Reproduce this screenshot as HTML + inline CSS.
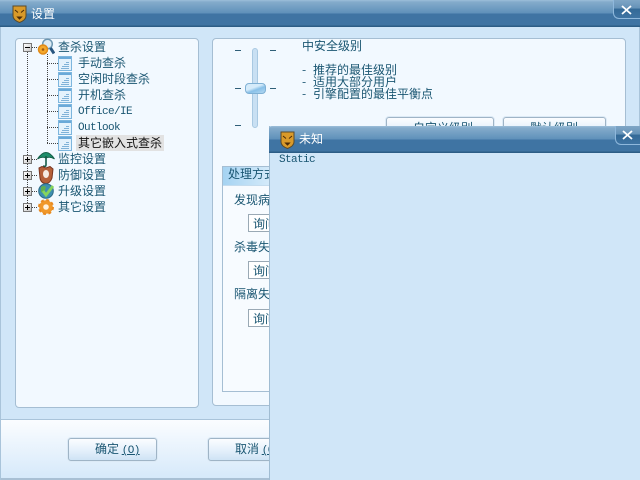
<!DOCTYPE html>
<html><head><meta charset="utf-8">
<style>
html,body{margin:0;padding:0;width:640px;height:480px;overflow:hidden;background:#d0e6f8}
*{box-sizing:border-box}
body{font:12px/14px "WenQuanYi Zen Hei","Noto Sans CJK SC",sans-serif;color:#1a5672}
.a{position:absolute}
.t{position:absolute;white-space:nowrap;line-height:14px;height:14px}
.m{font-family:"Liberation Mono",monospace;font-size:11px;letter-spacing:-.6px}
.bar{position:absolute;height:27px;background:linear-gradient(#9dbfd9 0,#84abcb 2px,#5f91ba 13px,#3f74a3 14px,#3f74a3 25px,#2c5d86 26px)}
.x{position:absolute;width:27px;height:19px;border:1px solid #8fb8dc;border-top:0;border-right:0;border-radius:0 0 0 6px;background:linear-gradient(#7fa6c6 0,#6592b8 45%,#336997 50%,#3f74a3 100%)}
.panel{position:absolute;background:#f2f9ff;border:1px solid #a5bed3;border-radius:4px}
.btn{position:absolute;border:1px solid #9fb4c6;border-radius:3px;background:linear-gradient(#fbfdff,#e4f0fb 55%,#cfe3f5);box-shadow:0 0 0 1px #dceaf6;color:#1a5672}
.combo{position:absolute;left:248px;width:40px;height:18px;background:#fff;border:1px solid #9aa9b5;border-right:0;padding:2px 0 0 4px}
.pm{position:absolute;left:23px;width:9px;height:9px;background:linear-gradient(135deg,#fff,#c8c8c8);border:1px solid #777}
.pm:before{content:"";position:absolute;left:1px;top:3px;width:5px;height:1px;background:#000}
.pm.p:after{content:"";position:absolute;left:3px;top:1px;width:1px;height:5px;background:#000}
.dv{position:absolute;width:1px;background:repeating-linear-gradient(#444 0 1px,transparent 1px 2px)}
.dh{position:absolute;height:1px;background:repeating-linear-gradient(90deg,#444 0 1px,transparent 1px 2px)}
.tk{position:absolute;width:6px;height:1px;background:#2f5f78}
</style></head><body>

<!-- main window -->
<div class="bar" style="left:0;top:0;width:640px"></div>
<svg class="a" style="left:12px;top:5px" width="15" height="18" viewBox="0 0 15 18"><path d="M1 1H14V11Q14 15 7.500 17.500Q1 15 1 11Z" fill="#d99a2a" stroke="#5a4a2a"/><path d="M3 5L6 7.500M12 5L9 7.500M5.500 12H9.500L7.500 14Z" stroke="#4a2a08" fill="#4a2a08"/></svg>
<div class="t" style="left:31px;top:7px;color:#fff">设置</div>
<div class="x" style="left:613px;top:0"></div>
<svg class="a" style="left:620px;top:5px" width="13" height="10" viewBox="0 0 13 10"><path d="M2 1L11 9M11 1L2 9" stroke="#fff" stroke-width="1.800"/></svg>

<!-- tree panel -->
<div class="panel" style="left:15px;top:38px;width:184px;height:370px"></div>
<div class="dv" style="left:27px;top:52px;height:156px"></div>
<div class="dv" style="left:47px;top:54px;height:90px"></div>
<div class="dh" style="left:47px;top:63px;width:11px"></div>
<div class="dh" style="left:47px;top:79px;width:11px"></div>
<div class="dh" style="left:47px;top:95px;width:11px"></div>
<div class="dh" style="left:47px;top:111px;width:11px"></div>
<div class="dh" style="left:47px;top:127px;width:11px"></div>
<div class="dh" style="left:47px;top:143px;width:11px"></div>
<div class="dh" style="left:32px;top:47px;width:6px"></div>
<div class="dh" style="left:32px;top:159px;width:6px"></div>
<div class="dh" style="left:32px;top:175px;width:6px"></div>
<div class="dh" style="left:32px;top:191px;width:6px"></div>
<div class="dh" style="left:32px;top:207px;width:6px"></div>
<div class="pm" style="top:43px"></div>
<div class="pm p" style="top:155px"></div>
<div class="pm p" style="top:171px"></div>
<div class="pm p" style="top:187px"></div>
<div class="pm p" style="top:203px"></div>

<svg class="a" style="left:37px;top:38px" width="18" height="18" viewBox="0 0 18 18"><circle cx="10.500" cy="6" r="4.800" fill="#dcebf5" stroke="#6d97b2" stroke-width="1.500"/><path d="M13.500 10L17 15.500" stroke="#27557f" stroke-width="3"/><circle cx="6" cy="11.500" r="4.500" fill="#f4a82a" stroke="#e08a18" stroke-width="1.500"/><circle cx="6" cy="11.500" r="1.300" fill="#a05a10"/></svg>
<svg class="a" style="left:37px;top:149px" width="18" height="19" viewBox="0 0 18 19"><path d="M0.500 10Q9 -3 17.500 10Q13 7 9 9Q5 7 0.500 10Z" fill="#1c8c6a" stroke="#146048"/><path d="M9 7V16Q9 18 6 17" stroke="#145a48" stroke-width="1.600" fill="none"/></svg>
<svg class="a" style="left:38px;top:166px" width="16" height="18" viewBox="0 0 16 18"><path d="M1 2L4 0.500L8 2L12 0.500L15 3L14 12Q12 17.500 8 17.500Q3 17.500 2 12Z" fill="#b5603a" stroke="#7a3520"/><ellipse cx="8" cy="8" rx="3" ry="4" fill="#f6ece4"/></svg>
<svg class="a" style="left:38px;top:183px" width="17" height="16" viewBox="0 0 17 16"><circle cx="8" cy="8" r="7.300" fill="#3d8fb0" stroke="#2a6a88"/><path d="M3 4Q6 2 8 4L6 10L3 9Z" fill="#5fae50"/><path d="M5 8L8 12L15 3" stroke="#86d45e" stroke-width="2.800" fill="none"/></svg>
<svg class="a" style="left:38px;top:199px" width="16" height="16" viewBox="0 0 16 16"><circle cx="8" cy="8" r="4.800" fill="#fff2dc" stroke="#f0982a" stroke-width="4"/><circle cx="8" cy="8" r="7" fill="none" stroke="#e88a20" stroke-width="2" stroke-dasharray="3 2.500"/></svg>

<svg class="a" style="left:58px;top:56px" width="14" height="96" viewBox="0 0 14 96"><defs><g id="d"><rect x=".5" y=".5" width="13" height="14" fill="#e4f2fc" stroke="#7db6de"/><rect x="1" y="1" width="12" height="2" fill="#6aa9d8"/><path d="M8 6.500H11M6 8.500H11M4 10.500H11M3 12.500H11" stroke="#7fb2d8"/></g></defs><use href="#d"/><use href="#d" y="16"/><use href="#d" y="32"/><use href="#d" y="48"/><use href="#d" y="64"/><use href="#d" y="80"/></svg>

<div class="t" style="left:58px;top:40px">查杀设置</div>
<div class="t" style="left:78px;top:56px">手动查杀</div>
<div class="t" style="left:78px;top:72px">空闲时段查杀</div>
<div class="t" style="left:78px;top:88px">开机查杀</div>
<div class="t m" style="left:78px;top:105px">Office/IE</div>
<div class="t m" style="left:78px;top:121px">Outlook</div>
<div class="a" style="left:76px;top:135px;width:88px;height:16px;background:#e2e2e2"></div>
<div class="t" style="left:78px;top:136px;color:#111">其它嵌入式查杀</div>
<div class="t" style="left:58px;top:152px">监控设置</div>
<div class="t" style="left:58px;top:168px">防御设置</div>
<div class="t" style="left:58px;top:184px">升级设置</div>
<div class="t" style="left:58px;top:200px">其它设置</div>

<!-- right panel -->
<div class="panel" style="left:212px;top:38px;width:414px;height:368px"></div>
<div class="a" style="left:252px;top:48px;width:6px;height:80px;background:#c9e0f3;border:1px solid #a9c9e2;border-radius:3px"></div>
<div class="a" style="left:245px;top:83px;width:21px;height:11px;border:1px solid #7fb0d4;border-radius:4px;background:linear-gradient(160deg,#d5ebfa 40%,#88c0e8 60%,#b4d9f2)"></div>
<div class="tk" style="left:235px;top:50px"></div>
<div class="tk" style="left:270px;top:50px"></div>
<div class="tk" style="left:235px;top:88px"></div>
<div class="tk" style="left:270px;top:88px"></div>
<div class="tk" style="left:235px;top:125px"></div>
<div class="t" style="left:302px;top:39px">中安全级别</div>
<div class="t" style="left:302px;top:63px">-</div><div class="t" style="left:313px;top:63px">推荐的最佳级别</div>
<div class="t" style="left:302px;top:75px">-</div><div class="t" style="left:313px;top:75px">适用大部分用户</div>
<div class="t" style="left:302px;top:87px">-</div><div class="t" style="left:313px;top:87px">引擎配置的最佳平衡点</div>
<div class="btn" style="left:386px;top:117px;width:108px;height:22px"></div><div class="t" style="left:413px;top:121px">自定义级别</div>
<div class="btn" style="left:503px;top:117px;width:103px;height:22px"></div><div class="t" style="left:530px;top:121px">默认级别</div>

<!-- group -->
<div class="a" style="left:222px;top:166px;width:70px;height:226px;background:#f7fbff;border:1px solid #a5bed3"></div>
<div class="a" style="left:223px;top:167px;width:60px;height:19px;background:linear-gradient(90deg,#a5d3f2,#e2f1fc);border-bottom:1px solid #c5dcee"></div>
<div class="t" style="left:228px;top:167px">处理方式</div>
<div class="t" style="left:234px;top:193px">发现病毒</div>
<div class="combo" style="top:214px">询问</div>
<div class="t" style="left:234px;top:240px">杀毒失败</div>
<div class="combo" style="top:261px">询问</div>
<div class="t" style="left:234px;top:287px">隔离失败</div>
<div class="combo" style="top:309px">询问</div>

<!-- footer -->
<div class="a" style="left:0;top:419px;width:640px;height:61px;background:linear-gradient(#fbfdff,#d6e9fa);border-top:1px solid #a9c4da;border-bottom:2px solid #a9c0d4"></div>
<div class="btn" style="left:68px;top:438px;width:89px;height:23px"></div>
<div class="t" style="left:95px;top:442px">确定 <span class="m" style="text-decoration:underline">(O)</span></div>
<div class="btn" style="left:208px;top:438px;width:89px;height:23px"></div>
<div class="t" style="left:235px;top:442px">取消 <span class="m" style="text-decoration:underline">(C)</span></div>

<div class="a" style="left:0;top:27px;width:1px;height:453px;background:#a9c4da"></div>
<div class="a" style="left:639px;top:27px;width:1px;height:100px;background:#a9c4da"></div>

<!-- second window -->
<div class="a" style="left:269px;top:126px;width:371px;height:354px;background:#d0e6f8;border-left:1px solid #a0bcd2"></div>
<div class="bar" style="left:269px;top:126px;width:371px;border-radius:3px 0 0 0"></div>
<svg class="a" style="left:280px;top:131px" width="15" height="18" viewBox="0 0 15 18"><path d="M1 1H14V11Q14 15 7.500 17.500Q1 15 1 11Z" fill="#d99a2a" stroke="#5a4a2a"/><path d="M3 5L6 7.500M12 5L9 7.500M5.500 12H9.500L7.500 14Z" stroke="#4a2a08" fill="#4a2a08"/></svg>
<div class="t" style="left:299px;top:132px;color:#fff">未知</div>
<div class="x" style="left:615px;top:126px"></div>
<svg class="a" style="left:621px;top:130px" width="13" height="10" viewBox="0 0 13 10"><path d="M2 1L11 9M11 1L2 9" stroke="#fff" stroke-width="1.800"/></svg>
<div class="t m" style="left:279px;top:153px">Static</div>
</body></html>
